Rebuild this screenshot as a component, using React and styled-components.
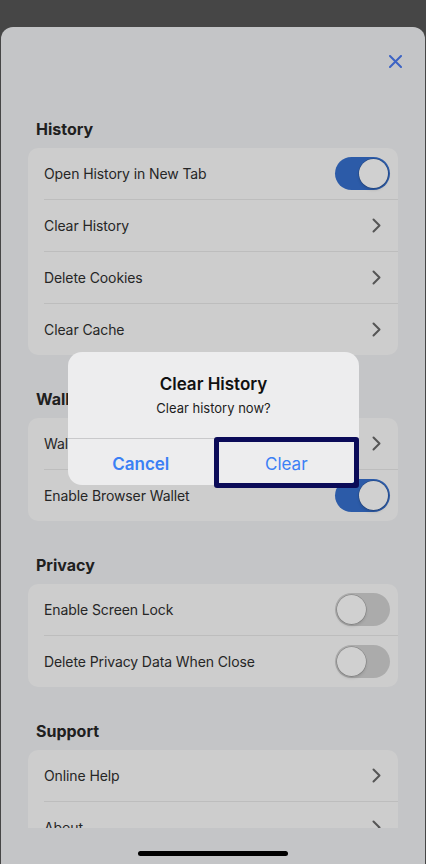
import React from "react";
import styled, { createGlobalStyle } from "styled-components";

const Global = createGlobalStyle`
  html, body { margin: 0; padding: 0; background: #464646; }
  body { font-family: "Inter", "Noto Sans", "Liberation Sans", sans-serif; -webkit-font-smoothing: antialiased; }
  * { box-sizing: border-box; }
`;

const Screen = styled.div`
  position: relative;
  width: 426px;
  height: 864px;
  padding-top: 27px;
  background: #464646;
  overflow: hidden;
`;

const Sheet = styled.div`
  margin: 0 1px;
  height: 837px;
  background: #c4c5c7;
  border-radius: 12px 12px 0 0;
  display: flex;
  flex-direction: column;
  overflow: hidden;
`;

const SheetTop = styled.div`
  height: 68px;
  flex: none;
  display: flex;
  align-items: center;
  justify-content: flex-end;
  padding-right: 20px;
`;

const CloseButton = styled.button`
  border: 0;
  background: none;
  padding: 0;
  width: 20px;
  height: 20px;
  display: flex;
  align-items: center;
  justify-content: center;
  color: #3c63c4;
`;

const Content = styled.div`
  flex: 1;
  overflow: hidden;
  padding: 24px 27px 0;
`;

const Section = styled.section`
  & + & { margin-top: 34px; }
`;

const SectionTitle = styled.h2`
  margin: 0;
  padding-left: 8px;
  height: 20px;
  line-height: 20px;
  font-size: 16px;
  font-weight: 700;
  color: #202020;
`;

const Card = styled.div`
  margin-top: 9px;
  background: #cdcdcd;
  border-radius: 10px;
  overflow: hidden;
`;

const Row = styled.div`
  box-sizing: content-box;
  height: 51px;
  margin-left: 16px;
  display: flex;
  align-items: center;
  justify-content: space-between;
  padding-right: 8px;
  & + & { border-top: 1px solid #bdbdbd; }
`;

const RowLabel = styled.span`
  font-size: 14px;
  color: #262626;
  letter-spacing: -0.1px;
`;

const Track = styled.div`
  position: relative;
  width: 55px;
  height: 33px;
  border-radius: 17px;
  background: ${(p) => (p.$on ? "#2c5ba8" : "#ababab")};
`;

const Knob = styled.div`
  position: absolute;
  top: 2px;
  left: ${(p) => (p.$on ? "24px" : "2px")};
  width: 29px;
  height: 29px;
  border-radius: 50%;
  background: #d0d0d0;
  box-shadow: 0 0 0 0.5px rgba(0, 0, 0, 0.25), 0 2px 3px rgba(0, 0, 0, 0.15);
`;

const Chevron = styled.svg`
  margin-right: 9px;
  display: block;
`;

const HomeBar = styled.div`
  height: 36px;
  flex: none;
  display: flex;
  justify-content: center;
  padding-top: 23px;
`;

const Indicator = styled.div`
  width: 150px;
  height: 5px;
  border-radius: 3px;
  background: #000;
`;

const Overlay = styled.div`
  position: absolute;
  inset: 0;
  display: flex;
  justify-content: center;
  align-items: flex-start;
  padding-top: 352px;
  padding-left: 1px;
`;

const Alert = styled.div`
  width: 291px;
  background: #ededee;
  border-radius: 14px;
`;

const AlertBody = styled.div`
  padding: 21px 16px 21px;
  text-align: center;
`;

const AlertTitle = styled.div`
  font-size: 17px;
  line-height: 22px;
  font-weight: 600;
  color: #111;
`;

const AlertMessage = styled.div`
  margin-top: 4px;
  font-size: 13px;
  line-height: 18px;
  color: #1c1c1c;
`;

const AlertActions = styled.div`
  display: grid;
  grid-template-columns: 1fr 1fr;
  border-top: 1px solid #c9c9cb;
  height: 47px;
`;

const AlertButton = styled.button`
  position: relative;
  border: 0;
  background: none;
  padding: 3px 0 0;
  font-family: inherit;
  font-size: 17px;
  color: #3b80f5;
  font-weight: ${(p) => (p.$bold ? 600 : 400)};
  ${(p) =>
    p.$focused &&
    `
    &::after {
      content: "";
      position: absolute;
      top: -2px;
      left: 0;
      right: 0;
      bottom: -3px;
      border: 5px solid #0b0b58;
      border-radius: 3px;
    }
  `}
`;

const Toggle = ({ on }) => (
  <Track $on={on}>
    <Knob $on={on} />
  </Track>
);

const ChevronIcon = () => (
  <Chevron width="9" height="15" viewBox="0 0 9 15">
    <path d="M1.5 1.5 L7.5 7.5 L1.5 13.5" fill="none" stroke="#555" strokeWidth="2" strokeLinecap="round" strokeLinejoin="round" />
  </Chevron>
);

const sections = [
  {
    title: "History",
    rows: [
      { label: "Open History in New Tab", toggle: true },
      { label: "Clear History" },
      { label: "Delete Cookies" },
      { label: "Clear Cache" },
    ],
  },
  {
    title: "Wallet",
    rows: [
      { label: "Wallet Connect" },
      { label: "Enable Browser Wallet", toggle: true },
    ],
  },
  {
    title: "Privacy",
    rows: [
      { label: "Enable Screen Lock", toggle: false },
      { label: "Delete Privacy Data When Close", toggle: false },
    ],
  },
  {
    title: "Support",
    rows: [{ label: "Online Help" }, { label: "About" }],
  },
];

export default function App() {
  return (
    <>
      <Global />
      <Screen>
        <Sheet>
          <SheetTop>
            <CloseButton aria-label="Close">
              <svg width="13" height="13" viewBox="0 0 13 13">
                <path d="M1 1 L12 12 M12 1 L1 12" stroke="currentColor" strokeWidth="2" strokeLinecap="round" />
              </svg>
            </CloseButton>
          </SheetTop>
          <Content>
            {sections.map((s) => (
              <Section key={s.title}>
                <SectionTitle>{s.title}</SectionTitle>
                <Card>
                  {s.rows.map((r) => (
                    <Row key={r.label}>
                      <RowLabel>{r.label}</RowLabel>
                      {typeof r.toggle === "boolean" ? <Toggle on={r.toggle} /> : <ChevronIcon />}
                    </Row>
                  ))}
                </Card>
              </Section>
            ))}
          </Content>
          <HomeBar>
            <Indicator />
          </HomeBar>
        </Sheet>
        <Overlay>
          <Alert>
            <AlertBody>
              <AlertTitle>Clear History</AlertTitle>
              <AlertMessage>Clear history now?</AlertMessage>
            </AlertBody>
            <AlertActions>
              <AlertButton $bold>Cancel</AlertButton>
              <AlertButton $focused>Clear</AlertButton>
            </AlertActions>
          </Alert>
        </Overlay>
      </Screen>
    </>
  );
}
